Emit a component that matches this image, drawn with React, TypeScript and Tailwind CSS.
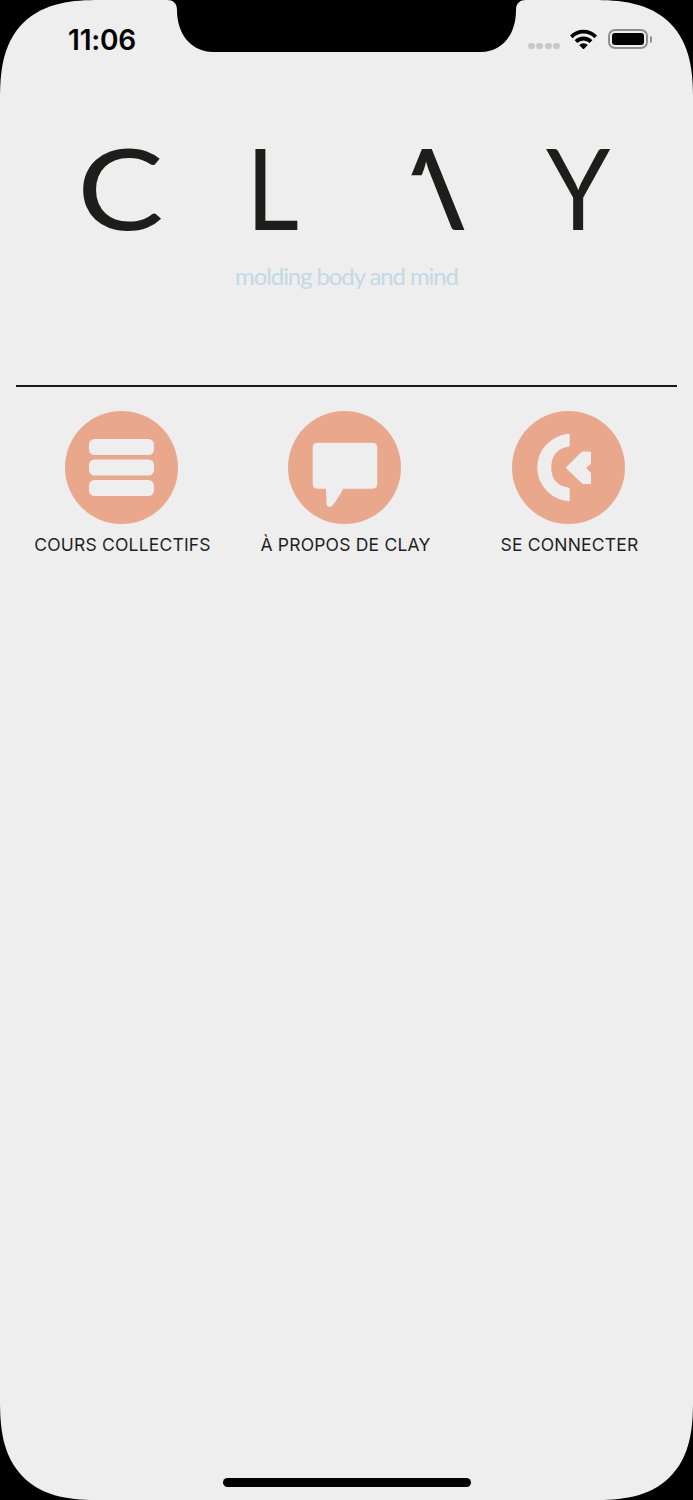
const sans = 'font-["Inter","Liberation_Sans",sans-serif]';

function Wifi() {
  return (
    <svg width="27" height="20" viewBox="0 0 27 20" className="block">
      <g fill="none" stroke="#000" strokeWidth="3.8">
        <path d="M1.3 7.8A17.2 17.2 0 0 1 25.7 7.8" />
        <path d="M6 12.6A10.6 10.6 0 0 1 21 12.6" />
      </g>
      <path d="M9.2 16.1A6 6 0 0 1 17.8 16.1L13.5 20.4Z" fill="#000" />
    </svg>
  );
}

function Battery() {
  return (
    <div className="flex items-center gap-[2px]">
      <div className="h-5 w-10 rounded-[7px] border-2 border-[#8f8f8f] p-[2px]">
        <div className="h-full w-full rounded-[3px] bg-black" />
      </div>
      <div className="h-[7px] w-[2px] rounded-r-sm bg-[#8f8f8f]" />
    </div>
  );
}

function StatusBar() {
  return (
    <div className="flex h-[80px] items-start justify-between pl-[68px] pr-[41px]">
      <span className={`${sans} mt-[22px] text-[28px] leading-[36px] font-semibold tracking-[-0.2px] text-black`}>11:06</span>
      <div className="mt-[29px] flex items-start">
        <div className="mt-[14px] mr-[10px] flex gap-[1.5px]">
          {[0, 1, 2, 3].map((i) => (
            <div key={i} className="h-[6px] w-[7px] rounded-full bg-[#c8c8c8]" />
          ))}
        </div>
        <div className="mr-[11px]">
          <Wifi />
        </div>
        <Battery />
      </div>
    </div>
  );
}

function Notch() {
  return (
    <svg width="360" height="52" viewBox="0 0 360 52" className="absolute top-0 left-[167px]">
      <path
        d="M0 0C6 0 10 3 10 10C10 36 26 52 46 52H314C334 52 349 36 349 10C349 3 353 0 359 0Z"
        fill="#000"
      />
    </svg>
  );
}

function Logo() {
  const letter = 'block w-fit font-["Lato","Liberation_Sans",sans-serif] text-[112px] leading-[84px] font-normal text-[#1d1d1b]';
  return (
    <div className="flex flex-col items-center">
      <div className="flex h-[84px] w-full items-center pl-[77px]">
        <div className="w-[169px]">
          <span className={`${letter} origin-left scale-x-[1.16]`}>C</span>
        </div>
        <div className="w-[143px]">
          <span className={`${letter} origin-left scale-x-[0.92]`}>L</span>
        </div>
        <div className="w-[157px]">
          <span className={`${letter} [clip-path:polygon(0_-20%,100%_-20%,100%_130%,50%_130%,50%_36%,0_36%)]`}>Λ</span>
        </div>
        <span className={`${letter} origin-left scale-x-[0.92]`}>Y</span>
      </div>
      <p className='mt-[31px] font-["Lato","Liberation_Sans",sans-serif] text-[24px] leading-[32px] tracking-[-1.1px] text-[#c2d9e6]'>
        molding body and mind
      </p>
    </div>
  );
}

function ListIcon() {
  return (
    <svg width="113" height="113" viewBox="0 0 113 113" className="block">
      <circle cx="56.5" cy="56.5" r="56.5" fill="#e9a78c" />
      <rect x="24" y="28" width="65" height="16" rx="5.5" fill="#eeeeee" />
      <rect x="24" y="48.5" width="65" height="16" rx="5.5" fill="#eeeeee" />
      <rect x="24" y="69" width="65" height="16" rx="5.5" fill="#eeeeee" />
    </svg>
  );
}

function BubbleIcon() {
  return (
    <svg width="113" height="113" viewBox="0 0 113 113" className="block">
      <circle cx="56.5" cy="56.5" r="56.5" fill="#e9a78c" />
      <path
        d="M29.7 31.7H84.3Q89.3 31.7 89.3 36.7V72.7Q89.3 77.7 84.3 77.7H55.3C52 84 48 90 44.5 94.5C42 97 38.8 96 38.6 93L38 77.7H29.7Q24.7 77.7 24.7 72.7V36.7Q24.7 31.7 29.7 31.7Z"
        fill="#eeeeee"
      />
    </svg>
  );
}

function LoginIcon() {
  return (
    <svg width="113" height="113" viewBox="0 0 113 113" className="block">
      <circle cx="56.5" cy="56.5" r="56.5" fill="#e9a78c" />
      <path
        d="M56.5 24V34.5C44 36 38 45 38 56.5C38 68 44 76 56.5 78V89C40 87 26.5 74 26.5 56.5C26.5 39 40 26 56.5 24Z"
        fill="#eeeeee"
        stroke="#eeeeee"
        strokeWidth="2.5"
        strokeLinejoin="round"
      />
      <path
        d="M55 56.7L70.5 41.5H78V52.5L72.5 56.7L78 62.5V72H71Z"
        fill="#eeeeee"
        stroke="#eeeeee"
        strokeWidth="2"
        strokeLinejoin="round"
      />
    </svg>
  );
}

const menu = [
  { label: 'COURS COLLECTIFS', icon: <ListIcon /> },
  { label: 'À PROPOS DE CLAY', icon: <BubbleIcon /> },
  { label: 'SE CONNECTER', icon: <LoginIcon /> },
];

export default function App() {
  return (
    <div className="h-[1500px] w-[693px] bg-black">
      <div className="relative h-full overflow-hidden rounded-[100px] bg-[#eeeeee] [corner-shape:superellipse(1.4)]">
        <Notch />
        <StatusBar />
        <div className="pt-[65px]">
          <Logo />
        </div>
        <div className="mx-4 mt-[93px] h-[2px] bg-[#1a1a1a]" />
        <div className="mt-[24px] grid grid-cols-[223px_223px_225px] pl-[10px]">
          {menu.map((item) => (
            <div key={item.label} className="flex flex-col items-center">
              {item.icon}
              <span className={`${sans} mt-[10px] ml-[2px] text-[17.5px] leading-[22px] tracking-[0.2px] whitespace-nowrap text-[#1f1f1f]`}>
                {item.label}
              </span>
            </div>
          ))}
        </div>
        <div className="absolute bottom-[13px] left-[223px] h-[9px] w-[248px] rounded-full bg-black" />
      </div>
    </div>
  );
}
